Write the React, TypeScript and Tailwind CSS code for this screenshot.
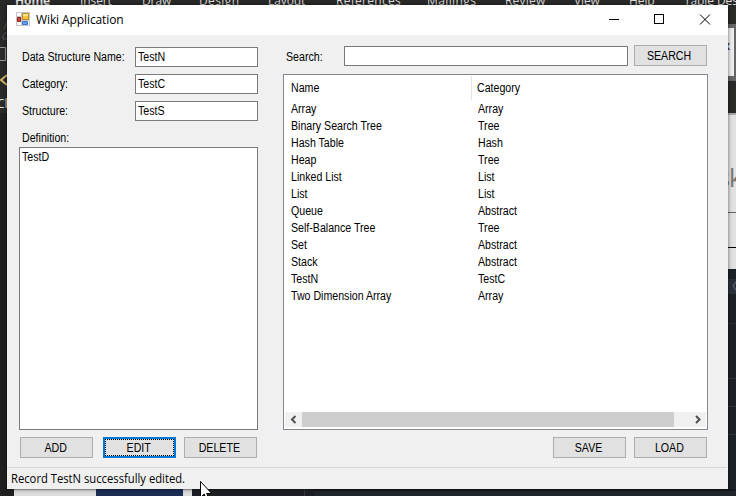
import type { ReactNode } from "react";

const records: [string, string][] = [
  ["Array", "Array"],
  ["Binary Search Tree", "Tree"],
  ["Hash Table", "Hash"],
  ["Heap", "Tree"],
  ["Linked List", "List"],
  ["List", "List"],
  ["Queue", "Abstract"],
  ["Self-Balance Tree", "Tree"],
  ["Set", "Abstract"],
  ["Stack", "Abstract"],
  ["TestN", "TestC"],
  ["Two Dimension Array", "Array"],
];

// Condensed label text used by every control in the form.
function Text({ children }: { children: ReactNode }) {
  return <span className="inline-block origin-left scale-x-[0.885] whitespace-nowrap">{children}</span>;
}

function Button({ children, focused = false, className = "" }: { children: ReactNode; focused?: boolean; className?: string }) {
  const frame = focused
    ? "border-2 border-[#0078d7] outline-1 outline-dotted -outline-offset-3 outline-black "
    : "border border-[#adadad] ";
  return (
    <button className={"flex h-[21px] w-[73px] shrink-0 items-center justify-center bg-[#e1e1e1] pr-[2px] leading-none " + frame + className}>
      <span className="scale-x-[0.885]">{children}</span>
    </button>
  );
}

function Field({ label, value }: { label: string; value: string }) {
  return (
    <div className="mb-[7px] flex h-5 items-center">
      <label className="w-[116px] shrink-0 pl-[3px]"><Text>{label}</Text></label>
      <div className="flex h-5 w-[123px] items-center border border-[#7a7a7a] bg-white pl-[2px]"><Text>{value}</Text></div>
    </div>
  );
}

function RibbonTabs() {
  return (
    <div className="flex h-[5px] overflow-hidden whitespace-nowrap bg-[#2a2a29] pl-[15px] font-['Open_Sans',sans-serif] text-[12px] leading-[16px] tracking-[-0.1px] text-[#dedede]">
      <span className="-mt-[7px] w-[65px] shrink-0 font-bold">Home</span>
      <span className="-mt-[7px] w-[62px] shrink-0">Insert</span>
      <span className="-mt-[7px] w-[57px] shrink-0">Draw</span>
      <span className="-mt-[7px] w-[69px] shrink-0 tracking-[0.4px]">Design</span>
      <span className="-mt-[7px] w-[68px] shrink-0">Layout</span>
      <span className="-mt-[7px] w-[91px] shrink-0 tracking-[0.3px]">References</span>
      <span className="-mt-[7px] w-[78px] shrink-0 tracking-[0.4px]">Mailings</span>
      <span className="-mt-[7px] w-[69px] shrink-0 tracking-[0.2px]">Review</span>
      <span className="-mt-[7px] w-[55px] shrink-0">View</span>
      <span className="-mt-[7px] w-[55px] shrink-0">Help</span>
      <span className="-mt-[7px] shrink-0">Table Design</span>
    </div>
  );
}

function Backdrop() {
  return (
    <div className="flex h-full flex-col">
      <RibbonTabs />
      <div className="flex h-[484px] justify-between">
        <div className="flex w-[7px] flex-col overflow-hidden bg-[#202020]">
          <div className="h-[108px] bg-[#2a2a29]">
            <svg width="7" height="108" viewBox="0 5 7 108" fill="none">
              <path d="M7 22L4 29M6 32L3 36v3h4" stroke="#555" />
              <path d="M0 47.5h5.5V61M0 60.5h5" stroke="#999" />
              <path d="M7 75L1 80l6 5" stroke="#d4b568" strokeWidth="2" />
              <text x="-3" y="108" fill="#ddd" fontSize="12" fontFamily="Open Sans">Cl</text>
            </svg>
          </div>
        </div>
        <div className="flex w-2 flex-col overflow-hidden">
          <div className="h-[19px] bg-[#2a2a29]" />
          <div className="h-[57px] border-y-2 border-[#666] bg-[#666] pt-[2px]">
            <div className="h-[48px] w-[6px] overflow-hidden bg-[#eee] pt-[10px] text-[12px] leading-4 text-black"><span className="-ml-[4px]">x</span></div>
          </div>
          <div className="h-[32px] bg-[#2a2a29]" />
          <div className="h-[156px] border-t-2 border-[#aaa] bg-[#e2e2e2] text-[#777]">
            <div className="h-[98px] border-b border-[#666] pt-[45px] font-['Open_Sans',sans-serif] text-[25px] leading-[34px]"><span className="-ml-[10px] tracking-[-1px]">sk</span></div>
            <div className="h-[35px] border-b border-black" />
          </div>
          <div className="h-[10px] bg-[#1c2127]" />
          <div className="flex h-[15px] items-center bg-[#2b323c]">
            <svg width="8" height="15" fill="none" stroke="#68717b"><path d="M8 3L5 7l3 4" /></svg>
          </div>
          <div className="h-[30px] border-b border-[#2a2d31] bg-[#1d2127]" />
          <div className="h-[55px] border-b border-[#30343a] bg-[#1d2125]" />
          <div className="h-[28px] border-b border-[#30343a] bg-[#1d2127]" />
          <div className="h-[28px] border-b border-[#30343a] bg-[#1d2127]" />
          <div className="grow bg-[#1d2128]" />
        </div>
      </div>
      <div className="flex h-[7px]">
        <div className="w-[14px] bg-[#202020]" />
        <div className="w-[82px] border-t border-[#aaa] bg-[#dcdcdc]" />
        <div className="w-[87px] bg-[#1b2e54]" />
        <div className="w-[9px] border-t border-[#aaa] bg-[#dcdcdc]" />
        <div className="w-[113px] border-r border-[#34383b] bg-[#1c2024]" />
        <div className="w-[10px] bg-[#1b1f23]" />
        <div className="grow border-t-2 border-[#17191d] bg-[#20252c]" />
      </div>
    </div>
  );
}

function TitleBar() {
  return (
    <header className="flex h-[30px] items-center bg-white pl-[9px]">
      <svg width="14" height="14" viewBox="0 0 14 14" className="mb-[2px] mr-[6px]">
        <path d="M0 0h14v14H0z" fill="#c4c7cc" />
        <path d="M1 1h4v3H1zM1 10h4v3H1z" fill="#fff" />
        <path d="M6 9h7v4H6z" fill="#fff" />
        <path d="M6.500 1.500h6v6h-6z" fill="#f5c53c" stroke="#b8891c" />
        <path d="M7 2h5v2H7z" fill="#ffe58e" />
        <path d="M1.500 5.500h3v4h-3z" fill="#cf4540" stroke="#942020" />
        <path d="M6.500 9.500h5v3h-5z" fill="#65a1ef" stroke="#3974cd" />
      </svg>
      <h1 className="grow font-['Open_Sans',sans-serif] text-[12px] leading-[16px] tracking-[-0.1px]">Wiki Application</h1>
      <svg width="119" height="30" viewBox="0 0 119 30" fill="none" stroke="#000" shapeRendering="crispEdges">
        <path d="M0 14.500h10M45.500 9.500h9v9h-9z" />
        <path d="M91 9.500l10 10M101 9.500l-10 10" shapeRendering="auto" />
      </svg>
    </header>
  );
}

function RecordList() {
  return (
    <div className="flex h-[356px] w-[425px] flex-col border border-[#828790] bg-white p-px">
      <div className="flex h-[24px] shrink-0 items-center">
        <span className="flex h-full w-[187px] items-center border-r border-[#e5e5e5] pl-[6px]"><Text>Name</Text></span>
        <span className="pl-[5px]"><Text>Category</Text></span>
      </div>
      <div className="grow pt-px">
        {records.map(([name, category]) => (
          <div key={name} className="flex h-[17px] items-center pl-[6px]">
            <span className="w-[187px]"><Text>{name}</Text></span>
            <Text>{category}</Text>
          </div>
        ))}
      </div>
      <div className="mb-px flex h-[15px] shrink-0 bg-[#f0f0f0]">
        <svg width="17" height="15" fill="none" stroke="#505050" strokeWidth="2"><path d="M10.500 4L7 7.500 10.500 11" /></svg>
        <div className="w-[372px] bg-[#cdcdcd]" />
        <svg className="ml-[15px]" width="17" height="15" fill="none" stroke="#505050" strokeWidth="2"><path d="M7 4l3.500 3.500L7 11" /></svg>
      </div>
    </div>
  );
}

export default function App() {
  return (
    <main className="relative h-[496px] w-[736px] overflow-hidden bg-[#202020] font-['Liberation_Sans',Arial,sans-serif] text-[12px] leading-[17px] text-black">
      <Backdrop />
      <section className="absolute left-[7px] top-[5px] flex h-[484px] w-[721px] flex-col bg-[#f0f0f0] shadow-[0_0_4px_rgba(0,0,0,0.6)]">
        <TitleBar />
        <div className="flex h-[432px] pl-3">
          <div className="w-[264px] pt-3">
            <Field label="Data Structure Name:" value="TestN" />
            <Field label="Category:" value="TestC" />
            <Field label="Structure:" value="TestS" />
            <div className="h-[19px] pl-[3px] pt-[2px]"><Text>Definition:</Text></div>
            <div className="h-[283px] w-[239px] border border-[#7a7a7a] bg-white pl-[2px] pt-px"><Text>TestD</Text></div>
            <div className="flex pl-px pt-[7px]">
              <Button>ADD</Button>
              <Button focused className="ml-[10px]">EDIT</Button>
              <Button className="ml-2">DELETE</Button>
            </div>
          </div>
          <div className="w-[425px] pt-[10px]">
            <div className="flex h-[29px] items-start">
              <label className="w-[61px] pl-[3px] pt-[4px]"><Text>Search:</Text></label>
              <div className="mt-px h-5 w-[284px] border border-[#7a7a7a] bg-white" />
              <Button className="ml-[6px]">SEARCH</Button>
            </div>
            <RecordList />
            <div className="flex justify-end gap-2 pr-px pt-[7px]">
              <Button>SAVE</Button>
              <Button>LOAD</Button>
            </div>
          </div>
        </div>
        <footer className="mr-px h-[22px] border-t border-[#d7d7d7] pl-[4px] pt-[3px] font-['Open_Sans',sans-serif] text-[12px] leading-[16px]">
          <span className="inline-block origin-left scale-x-[0.936] whitespace-nowrap">Record TestN successfully edited.</span>
        </footer>
      </section>
      <svg className="absolute left-[200px] top-[481px]" width="13" height="20" viewBox="0 0 13 20">
        <path d="M.5.5v16l3.700-3.500 2.500 6 2.500-1-2.500-5.500h5z" fill="#fff" stroke="#000" />
      </svg>
    </main>
  );
}
